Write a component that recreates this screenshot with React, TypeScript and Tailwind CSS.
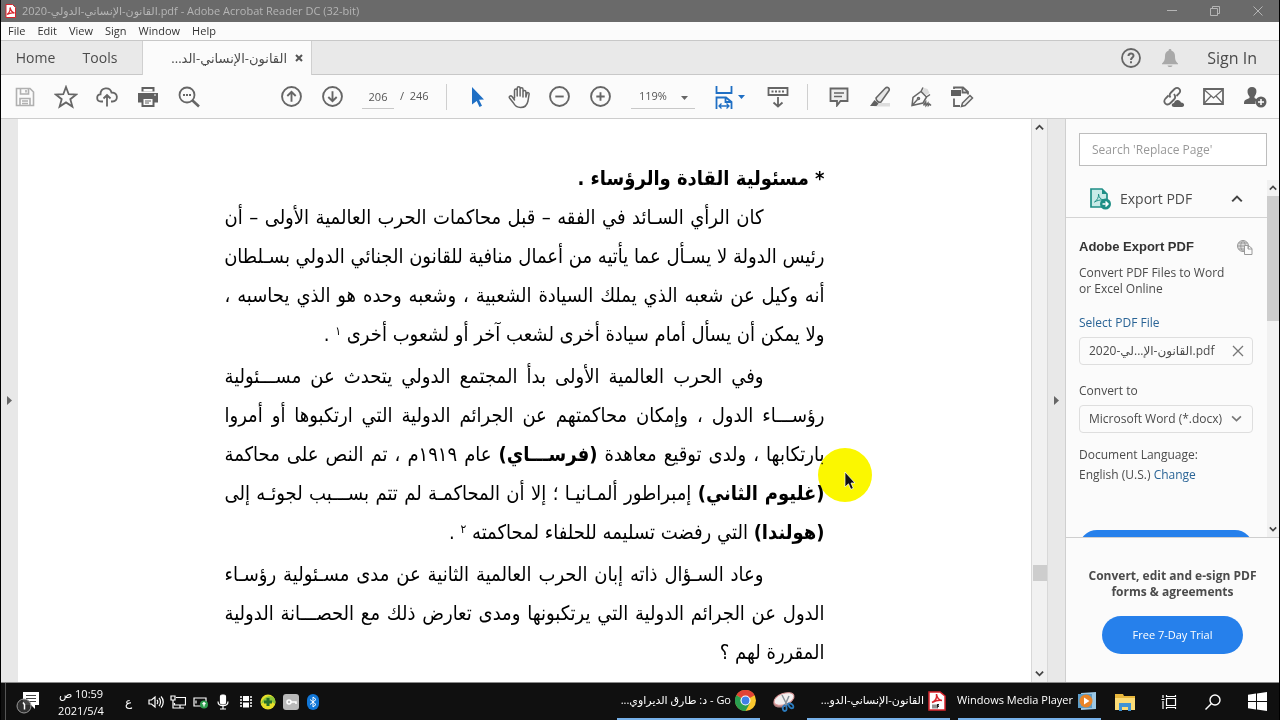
import type { ReactNode } from 'react';

interface IconButtonProps {
    label: string;
    children: ReactNode;
    className?: string;
}

interface TaskProps {
    label: string;
    rtl?: boolean;
    children: ReactNode;
}

interface LineProps {
    children: ReactNode;
    indent?: boolean;
    last?: boolean;
}

const stroke = { fill: 'none', stroke: '#666', strokeWidth: 1.8 };

function IconButton({ label, children, className = 'w-[41px]' }: IconButtonProps) {
    return (
        <button aria-label={label} className={`h-full shrink-0 flex items-center justify-center ${className}`}>
            {children}
        </button>
    );
}

function Line({ children, indent = false, last = false }: LineProps) {
    return (
        <span className={`block whitespace-nowrap ${indent ? 'pr-[61px]' : ''} ${last ? '' : '[text-align-last:justify]'}`}>
            {children}
        </span>
    );
}

function Chevron({ up = false, size = 10, color = '#444', width = 2 }: { up?: boolean; size?: number; color?: string; width?: number }) {
    return (
        <svg width={size} height={size} viewBox="0 0 10 10" fill="none" stroke={color} strokeWidth={width}>
            <path d={up ? 'M1 7 5 3l4 4' : 'M1 3l4 4 4-4'} />
        </svg>
    );
}

function Task({ label, rtl = false, children }: TaskProps) {
    return (
        <button className="h-full w-[143px] shrink-0 flex items-center justify-end gap-1 pr-1 border-b-2 border-[#76b0e8] text-[11px] text-white">
            <span dir={rtl ? 'rtl' : 'ltr'} className="whitespace-nowrap">{label}</span>
            {children}
        </button>
    );
}

function TitleBar() {
    return (
        <header className="h-[22px] shrink-0 flex items-center bg-[#6a6a6a] pl-1 text-[11px] text-[#b5b5b5]">
            <svg width="11" height="14" viewBox="0 0 11 14">
                <path d="M1 .5h6.500L10.500 3.500v10H1z" fill="#fff" stroke="#d9262e" />
                <path d="M2 10.500C4 9 5.500 6 5 3.500c1 4 2.500 5 4.500 5.500C7 8.500 4.500 9 2 10.500z" fill="none" stroke="#d9262e" strokeWidth="1.300" />
            </svg>
            <span className="ml-[6px]">القانون-الإنساني-الدولي-2020.pdf - Adobe Acrobat Reader DC (32-bit)</span>
            <div className="ml-auto h-full flex">
                <IconButton label="Minimize" className="w-[42px]">
                    <svg width="10" height="10" viewBox="0 0 10 10" stroke="#b5b5b5"><path d="M0 4.500h10" /></svg>
                </IconButton>
                <IconButton label="Restore" className="w-[43px]">
                    <svg width="10" height="10" viewBox="0 0 10 10" fill="none" stroke="#b5b5b5"><path d="M.5 2.500h7v7h-7zM2.500 2V.5h7v7H8" /></svg>
                </IconButton>
                <IconButton label="Close" className="w-[43px]">
                    <svg width="10" height="10" viewBox="0 0 10 10" stroke="#b5b5b5"><path d="M.5.5l9 9M9.500.5l-9 9" /></svg>
                </IconButton>
            </div>
        </header>
    );
}

function MenuBar() {
    return (
        <nav className="h-[18px] shrink-0 flex items-center gap-3 bg-[#fbfbfb] pl-[7px] text-[11px] text-[#333]">
            {['File', 'Edit', 'View', 'Sign', 'Window', 'Help'].map(item => (
                <button key={item}>{item}</button>
            ))}
        </nav>
    );
}

function TabBar() {
    return (
        <div className="h-[35px] shrink-0 flex bg-[#e9e9e9] border-y border-[#c8c8c8] text-sm text-[#4b4b4b]">
            <button className="w-[69px]">Home</button>
            <button className="w-[60px]">Tools</button>
            <div className="ml-3 -mb-px w-[170px] flex items-center justify-end gap-2 bg-[#fbfbfb] border-x border-[#d0d0d0] pr-2">
                <span dir="rtl" className="text-[13px]">القانون-الإنساني-الد...</span>
                <button aria-label="Close tab">
                    <svg width="8" height="8" viewBox="0 0 8 8" stroke="#555" strokeWidth="2"><path d="M1 1l6 6M7 1 1 7" /></svg>
                </button>
            </div>
            <div className="ml-auto flex items-center pr-[22px]">
                <IconButton label="Help" className="w-[39px]">
                    <svg width="20" height="20" viewBox="0 0 20 20" {...stroke}>
                        <circle cx="10" cy="10" r="9" />
                        <path d="M7.500 8c0-3.300 5-3.300 5-.3C12.500 9.500 10 9.500 10 12M10 13.300v2" strokeWidth="2" />
                    </svg>
                </IconButton>
                <IconButton label="Notifications" className="w-[39px]">
                    <svg width="18" height="20" viewBox="0 0 18 20" fill="#a9a9a9">
                        <path d="M9 1c1 0 1.500.7 1.500 1.700C13 3.400 14 5.500 14 8c0 4 .8 5.500 3 7.500v.8H1v-.8C3.200 13.500 4 12 4 8c0-2.500 1-4.600 3.500-5.300C7.500 1.700 8 1 9 1zM6.500 17.500h5c-.5 2-4.500 2-5 0z" />
                    </svg>
                </IconButton>
                <button className="ml-[18px] text-base font-medium">Sign In</button>
            </div>
        </div>
    );
}

function Toolbar() {
    return (
        <div className="h-11 shrink-0 flex items-center bg-[#fbfbfb] border-b border-[#cdcdcd] pl-[3px] pr-1 text-[11px] text-[#555]">
            <IconButton label="Save">
                <svg width="20" height="20" viewBox="0 0 20 20" fill="none" stroke="#b0b0b0" strokeWidth="1.600">
                    <path d="M1.500 1.500h13.500l3.500 3.500v13.500h-17zM5.500 1.500v5.500h8V1.500M11 3v2.500M5 18.500v-7h10v7M7 14h6M7 16.500h6" />
                </svg>
            </IconButton>
            <IconButton label="Star">
                <svg width="24" height="24" viewBox="0 0 24 24" {...stroke}>
                    <path d="M12 2l2.700 7.200 7.600.3-6 4.700 2.100 7.400L12 17.400l-6.400 4.200 2.100-7.400-6-4.700 7.600-.3z" />
                </svg>
            </IconButton>
            <IconButton label="Upload to cloud">
                <svg width="22" height="22" viewBox="0 0 22 22" {...stroke}>
                    <path d="M7 15.500H5c-5 0-5-7-.5-7.200C4.500 1 14 .5 15.500 6.500c7-.3 7 9 1 9H15M11 20.500V9M7.500 12.500 11 9l3.500 3.500" />
                </svg>
            </IconButton>
            <IconButton label="Print">
                <svg width="20" height="20" viewBox="0 0 20 20">
                    <path d="M3.500 0h13v4.500h-13zM0 6h20v9.500h-4V11H4v4.500H0zM3.500 11h13v9h-13z" fill="#606060" />
                    <path d="M5.500 2h9v2.500h-9zM5.500 12h9v6h-9z" fill="#fbfbfb" />
                    <path d="M7 14h6M7 16h4" stroke="#606060" />
                    <path d="M16 8h2" stroke="#fff" />
                </svg>
            </IconButton>
            <IconButton label="Find">
                <svg width="22" height="22" viewBox="0 0 22 22" {...stroke}>
                    <circle cx="9" cy="9" r="7.500" />
                    <path d="M14.500 14.500l6.500 6" strokeWidth="2.600" />
                    <path d="M5 9h2M8 9h2M11 9h2" />
                </svg>
            </IconButton>
            <div className="ml-[62px] h-full flex">
                <IconButton label="Previous page">
                    <svg width="21" height="21" viewBox="0 0 20 20" {...stroke}>
                        <circle cx="10" cy="10" r="9" />
                        <path d="M10 15V5.500M6 9.500l4-4 4 4" />
                    </svg>
                </IconButton>
                <IconButton label="Next page">
                    <svg width="21" height="21" viewBox="0 0 20 20" {...stroke}>
                        <circle cx="10" cy="10" r="9" />
                        <path d="M10 5v9.500M6 10.500l4 4 4-4" />
                    </svg>
                </IconButton>
            </div>
            <input aria-label="Page number" defaultValue="206" className="ml-[9px] w-8 h-6 text-center bg-transparent border-b border-[#c8c8c8]" />
            <span className="ml-[6px] w-[38px] whitespace-pre">/  246</span>
            <div className="ml-2 mr-[10px] w-px h-[26px] bg-[#cfcfcf]" />
            <IconButton label="Select tool">
                <svg width="14" height="20" viewBox="0 0 14 20" fill="#1f6fc4"><path d="M1 0l12 12.500-5 .3 3 6-2.500 1.200-2.800-6L1 17.500z" /></svg>
            </IconButton>
            <IconButton label="Hand tool">
                <svg width="22" height="24" viewBox="0 0 22 24" {...stroke} strokeWidth="1.500" strokeLinejoin="round" strokeLinecap="round">
                    <path d="M6.500 13V5.500c0-2 2.700-2 2.700 0V11 3.200c0-2 2.900-2 2.900 0V11 4.200c0-2 2.900-2 2.900 0V12 7c0-2 2.900-2 2.900 0v5l1-3.500c.5-1.500 2.500-1 2.200.7L20 16c-.8 4-3.500 6.500-7.500 6.500-3.500 0-5.500-1.500-7-4.500L1.500 13c-1-1.800 1.200-2.800 2.500-1.500L6.500 15" />
                </svg>
            </IconButton>
            <IconButton label="Zoom out">
                <svg width="21" height="21" viewBox="0 0 20 20" {...stroke}><circle cx="10" cy="10" r="9" /><path d="M6 10h8" /></svg>
            </IconButton>
            <IconButton label="Zoom in">
                <svg width="21" height="21" viewBox="0 0 20 20" {...stroke}><circle cx="10" cy="10" r="9" /><path d="M6 10h8M10 6v8" /></svg>
            </IconButton>
            <div className="relative ml-[10px]">
                <select aria-label="Zoom level" className="appearance-none w-16 h-6 pl-2 bg-transparent border-b border-[#c8c8c8]">
                    <option>119%</option>
                </select>
                <svg width="7" height="4" viewBox="0 0 7 4" fill="#666" className="absolute right-[7px] top-[11px] pointer-events-none"><path d="M0 0h7L3.500 4z" /></svg>
            </div>
            <IconButton label="Fit width" className="ml-4 w-[38px] gap-[5px]">
                <svg width="18" height="24" viewBox="0 0 18 24" fill="none" stroke="#1f6fc4" strokeWidth="1.800">
                    <path d="M1.500 1v7h15V1M1.500 24V12.500h9.500l5.500 4.500v7M10.500 12.500V17h6" />
                    <path d="M4 21h10M6.500 18.500 4 21l2.500 2.500M11.500 18.500 14 21l-2.500 2.500" strokeWidth="1.300" />
                </svg>
                <svg width="7" height="4" viewBox="0 0 7 4" fill="#1f6fc4"><path d="M0 0h7L3.500 4z" /></svg>
            </IconButton>
            <IconButton label="Scroll mode" className="ml-2 w-[41px]">
                <svg width="22" height="22" viewBox="0 0 22 22" {...stroke}>
                    <path d="M1.500 2h19v7h-19zM4.500 5.500h2M8 5.500h2M11.500 5.500h2M15 5.500h2M11 11v9.500M6.500 16.500l4.500 4 4.500-4" />
                </svg>
            </IconButton>
            <div className="ml-[9px] mr-[10px] w-px h-[26px] bg-[#cfcfcf]" />
            <IconButton label="Comment">
                <svg width="20" height="20" viewBox="0 0 20 20" {...stroke}>
                    <path d="M1.500 1.500h17v12.500h-7L8 18.500V14H1.500z" fill="#eee" /><path d="M5 6h10M5 9.500h8" strokeWidth="1.400" />
                </svg>
            </IconButton>
            <IconButton label="Highlight">
                <svg width="22" height="22" viewBox="0 0 22 22" {...stroke} strokeWidth="1.600">
                    <path d="M8 17h13v3.500H5z" fill="#ddd" stroke="none" />
                    <path d="M7 12 16 2.500c2.500-2.500 5.500 0 3.500 2.800L12 16c-2 1-5-1-5-4z" fill="#e6e6e6" />
                    <path d="M5.500 14l4 3.500-2 2.500H1z" fill="#606060" stroke="none" />
                </svg>
            </IconButton>
            <IconButton label="Sign">
                <svg width="22" height="22" viewBox="0 0 22 22" {...stroke} strokeWidth="1.500">
                    <path d="M11.500 6l3-4 3 1 2 4-3 2z" fill="#ddd" stroke="none" />
                    <path d="M2 19.500 3 11.500l8-6 5.500 5.500-3.500 6zM2 19.500l5.500-6M13 1.500l-2 4M16.500 11l3.500-2.500M13.500 19.500l2.200-3.500.3 3.500 2-2.500.3 2.500 1.200-1.500 1.500 1.500" />
                    <circle cx="8.500" cy="12.500" r="1" />
                </svg>
            </IconButton>
            <IconButton label="More tools">
                <svg width="24" height="22" viewBox="0 0 24 22" {...stroke}>
                    <path d="M1 4h10v6H1z" fill="#606060" stroke="none" />
                    <path d="M4 3V1.500h9l5 4.500v2.500M12.500 1.500V6.500H18M4 12.500v7.500h6" />
                    <path d="M12.500 17 20 9.500l2.500 2.500L15 19.500l-3.500 1z" fill="#eee" strokeWidth="1.500" />
                </svg>
            </IconButton>
            <div className="ml-auto h-full flex">
                <IconButton label="Share link">
                    <svg width="24" height="22" viewBox="0 0 24 22" {...stroke}>
                        <path d="M9.500 11.500c-1.500-2-1-3.500.5-5l3.500-3.500c3.500-3 7.500 1 4.500 4.500l-2.500 2.500M13 8c1.500 2 1.500 4 0 5.500L9.500 17c-3.500 3.500-8.500-.5-5-4.500L7.500 9.500" />
                        <path d="M13 21c-3 0-3-4 0-4 1-4 6-4 7-.5 4 0 4 4.500 1 4.500z" fill="#606060" stroke="none" />
                    </svg>
                </IconButton>
                <IconButton label="Email">
                    <svg width="21" height="17" viewBox="0 0 21 17" {...stroke}>
                        <path d="M1 1h19v15H1z" /><path d="M1 1.500l9.500 8.500L20 1.500M1 15.500l7-7.500M20 15.500 13 8" strokeWidth="1.200" />
                    </svg>
                </IconButton>
                <IconButton label="Add people">
                    <svg width="24" height="22" viewBox="0 0 24 22" fill="#606060">
                        <path d="M9 1c6 0 5 7 2.500 9.500V12l3 1.500c-2 1-2.500 2.500-2 4.500H1c0-4 1-4 5.500-6v-1.500C4 8 3 1 9 1z" />
                        <circle cx="18" cy="16" r="5.500" /><path d="M15 16h6M18 13v6" stroke="#fff" strokeWidth="1.500" />
                    </svg>
                </IconButton>
            </div>
        </div>
    );
}

function DocumentPage() {
    return (
        <main className="relative flex-1 min-w-0 overflow-hidden bg-white">
            <article dir="rtl" className="mx-auto mt-10 w-full max-w-[600px] font-['DejaVu_Sans_Condensed','DejaVu_Sans',sans-serif] text-xl leading-[39px] text-black">
                <h1 className="text-xl leading-[39px] font-bold">* مسئولية القادة والرؤساء .</h1>
                <p>
                    <Line indent>كان الرأي السـائد في الفقه – قبل محاكمات الحرب العالمية الأولى – أن</Line>
                    <Line>رئيس الدولة لا يسـأل عما يأتيه من أعمال منافية للقانون الجنائي الدولي بسـلطان</Line>
                    <Line>أنه وكيل عن شعبه الذي يملك السيادة الشعبية ، وشعبه وحده هو الذي يحاسبه ،</Line>
                    <Line last>ولا يمكن أن يسأل أمام سيادة أخرى لشعب آخر أو لشعوب أخرى <sup className="text-xs leading-none">١</sup> .</Line>
                </p>
                <p className="mt-[3px]">
                    <Line indent>وفي الحرب العالمية الأولى بدأ المجتمع الدولي يتحدث عن مســـئولية</Line>
                    <Line>رؤســـاء الدول ، وإمكان محاكمتهم عن الجرائم الدولية التي ارتكبوها أو أمروا</Line>
                    <Line>بارتكابها ، ولدى توقيع معاهدة <b>(فرســـاي)</b> عام ١٩١٩م ، تم النص على محاكمة</Line>
                    <Line><b>(غليوم الثاني)</b> إمبراطور ألمـانيـا ؛ إلا أن المحاكمـة لم تتم بســـبب لجوئـه إلى</Line>
                    <Line last><b>(هولندا)</b> التي رفضت تسليمه للحلفاء لمحاكمته <sup className="text-xs leading-none">٢</sup> .</Line>
                </p>
                <p className="mt-[3px]">
                    <Line indent>وعاد السـؤال ذاته إبان الحرب العالمية الثانية عن مدى مسـئولية رؤسـاء</Line>
                    <Line>الدول عن الجرائم الدولية التي يرتكبونها ومدى تعارض ذلك مع الحصـــانة الدولية</Line>
                    <Line last>المقررة لهم ؟</Line>
                </p>
            </article>
            <div className="absolute left-[800px] top-[329px] size-[54px] rounded-full bg-[#fbf700] mix-blend-multiply" />
            <svg width="12" height="20" viewBox="0 0 12 20" className="absolute left-[826px] top-[352px]">
                <path d="M1 1v15l3.500-3.200 2.300 5.500 2.500-1-2.300-5.300H11z" fill="#111" stroke="#fff" strokeWidth=".7" />
            </svg>
        </main>
    );
}

function DocumentScrollbar() {
    return (
        <div className="w-[17px] shrink-0 flex flex-col items-center bg-[#f1f1f1] border-x border-[#d8d8d8]">
            <button aria-label="Scroll up" className="h-[17px]"><Chevron up size={9} /></button>
            <div className="flex-[46]" />
            <div className="h-4 w-[14px] bg-[#cdcdcd]" />
            <div className="flex-[9]" />
            <button aria-label="Scroll down" className="h-[17px]"><Chevron size={9} /></button>
        </div>
    );
}

function ExportPanel() {
    return (
        <aside className="w-[214px] shrink-0 flex flex-col bg-[#fbfbfb] border-l border-[#cfcfcf] text-xs text-[#4b4b4b]">
            <div className="pl-[13px] pr-3 py-[14px]">
                <input aria-label="Search tools" placeholder="Search 'Replace Page'" className="w-full h-[33px] px-3 bg-white border border-[#bdbdbd] placeholder:text-[#999]" />
            </div>
            <div className="flex-1 min-h-0 flex">
                <div className="flex-1 min-w-0 overflow-hidden">
                    <button className="w-full h-[38px] flex items-center pl-6 pr-6 border-b border-[#d4d4d4] text-sm">
                        <svg width="21" height="22" viewBox="0 0 21 22">
                            <path d="M1 1h11l5 5v13H1z" fill="#c9ebe8" stroke="#1f8f86" strokeWidth="1.700" />
                            <path d="M12 1v5h5" fill="#1f8f86" />
                            <path d="M4.500 14C7 12.500 9 9 8.500 6c.5 4 2.500 5.500 5 6-3-.5-6.500.5-9 2z" fill="none" stroke="#1f8f86" />
                            <circle cx="15.500" cy="16" r="5.500" fill="#1f8f86" />
                            <path d="M12.500 16h5M15.500 13.500 18 16l-2.500 2.500" stroke="#fff" strokeWidth="1.500" fill="none" />
                        </svg>
                        <span className="ml-[9px]">Export PDF</span>
                        <span className="ml-auto"><Chevron up size={12} width={1.7} /></span>
                    </button>
                    <div className="pl-[13px] pr-[14px] pt-[19px]">
                        <div className="flex items-center justify-between">
                            <h2 className="font-['Liberation_Sans',sans-serif] text-[13px] leading-5 font-bold text-[#333]">Adobe Export PDF</h2>
                            <svg width="16" height="15" viewBox="0 0 16 15" fill="none" stroke="#999">
                                <circle cx="6" cy="6" r="5.500" fill="#ddd" />
                                <path d="M.5 6h11M6 .5c-3 3-3 8 0 11M6 .5c3 3 3 8 0 11M1.500 3h9M1.500 9h9" />
                                <path d="M7.500 5.500h4l3.500 3v6H7.500zM11 5.500V9h4" fill="#fbfbfb" />
                            </svg>
                        </div>
                        <p className="mt-2 leading-4">Convert PDF Files to Word<br />or Excel Online</p>
                        <a href="#file" className="block mt-4 leading-5 text-[#2a6496]">Select PDF File</a>
                        <div className="mt-1 h-7 flex items-center justify-between border border-[#dedede] rounded-sm pl-[9px] pr-2">
                            <span className="whitespace-nowrap">القانون-الإ...لي-2020.pdf</span>
                            <button aria-label="Remove file">
                                <svg width="12" height="12" viewBox="0 0 12 12" stroke="#777" strokeWidth="1.300"><path d="M1 1l10 10M11 1 1 11" /></svg>
                            </button>
                        </div>
                        <label htmlFor="format" className="block mt-4 leading-5">Convert to</label>
                        <div className="relative mt-1">
                            <select id="format" className="appearance-none w-full h-7 pl-[9px] border border-[#dedede] rounded-sm">
                                <option>Microsoft Word (*.docx)</option>
                            </select>
                            <span className="absolute right-[11px] top-2 pointer-events-none"><Chevron size={11} color="#777" width={1.5} /></span>
                        </div>
                        <p className="mt-3 leading-5">Document Language:</p>
                        <p className="leading-5">English (U.S.) <a href="#language" className="text-[#2a6496]">Change</a></p>
                        <button aria-label="Convert" className="block mt-[45px] w-full h-9 rounded-full bg-[#2680eb]" />
                    </div>
                </div>
                <div className="w-3 shrink-0 flex flex-col items-center bg-[#f1f1f1]">
                    <button aria-label="Scroll panel up" className="h-4"><Chevron up size={8} /></button>
                    <div className="flex-[5] w-full bg-[#cdcdcd]" />
                    <div className="flex-[8]" />
                    <button aria-label="Scroll panel down" className="h-4"><Chevron size={8} /></button>
                </div>
            </div>
            <div className="h-[145px] shrink-0 border-t border-[#cfcfcf] pt-[30px] text-center">
                <p className="leading-4 font-bold">Convert, edit and e-sign PDF<br />forms &amp; agreements</p>
                <button className="mt-4 w-[141px] h-[38px] rounded-full bg-[#2680eb] text-[11px] text-white">Free 7-Day Trial</button>
            </div>
        </aside>
    );
}

function Taskbar() {
    return (
        <footer className="h-[38px] shrink-0 flex items-center bg-[#101010] border-t border-[#8a8a8a] text-white">
            <div className="ml-1 w-px h-full bg-[#555]" />
            <IconButton label="Notifications" className="w-11">
                <svg width="24" height="24" viewBox="0 0 24 24">
                    <path d="M7 2h16v13h-4v4l-4-4H7z" fill="#fff" />
                    <path d="M10 5.500h10M10 8.500h10M12 11.500h8" stroke="#444" />
                    <circle cx="8" cy="16" r="7" fill="#333" fillOpacity=".9" stroke="#999" />
                    <path d="M7 12.500l1.500 2v5" stroke="#fff" strokeWidth="1.500" fill="none" />
                </svg>
            </IconButton>
            <div dir="rtl" className="w-[62px] text-center text-[11px] leading-[17px]">
                <p>10:59 ص</p>
                <p>2021/5/4</p>
            </div>
            <button className="w-[33px] text-xs">ع</button>
            <IconButton label="Volume" className="w-[22px]">
                <svg width="16" height="14" viewBox="0 0 16 14" fill="none" stroke="#fff" strokeWidth="1.200">
                    <path d="M1 5h2.500L7 2v10L3.500 9H1zM9 5c1 1 1 3 0 4M11 3c2 2 2 6 0 8M13 1.500c3 3 3 8 0 11" />
                </svg>
            </IconButton>
            <IconButton label="Network" className="w-[22px]">
                <svg width="16" height="14" viewBox="0 0 16 14" fill="none" stroke="#fff" strokeWidth="1.200">
                    <path d="M6 2.500h9.500v7.500h-11V8M10 10v2.500M6 13h8M1 1h4v4H1zM3 5v8h3" />
                </svg>
            </IconButton>
            <IconButton label="Drive" className="w-[23px]">
                <svg width="16" height="14" viewBox="0 0 16 14" fill="none" stroke="#fff" strokeWidth="1.200">
                    <path d="M1 3h12v8H1zM3 5.500v3" /><circle cx="11" cy="9.500" r="4" fill="#2e9e4f" stroke="none" /><path d="M11 7.500v4M9.500 9l1.500-1.500L12.500 9" />
                </svg>
            </IconButton>
            <IconButton label="Microphone" className="w-[22px]">
                <svg width="12" height="16" viewBox="0 0 12 16" fill="none" stroke="#fff" strokeWidth="1.200">
                    <rect x="3.500" y="1" width="5" height="9" rx="1.500" fill="#fff" /><path d="M1 7.500c0 5.500 10 5.500 10 0M6 12v3M3 15h6" />
                </svg>
            </IconButton>
            <IconButton label="Video" className="w-[23px]">
                <svg width="12" height="14" viewBox="0 0 12 14" fill="#fff">
                    <path d="M3 1h6v5H3zM3 7.500h6v5H3z" /><path d="M1 1v12M11 1v12" stroke="#fff" strokeWidth="1.500" strokeDasharray="2 1" />
                </svg>
            </IconButton>
            <IconButton label="Antivirus" className="w-[22px]">
                <svg width="16" height="16" viewBox="0 0 16 16"><circle cx="8" cy="8" r="7.500" fill="#e7e02a" /><path d="M1 10c2-7 8-9 12-7 2 1 3 5 2 7-5-4-9-3-14 0z" fill="#8cc63a" /><path d="M8 4v8M4 8h8" stroke="#25702b" strokeWidth="3" /></svg>
            </IconButton>
            <IconButton label="Security key" className="w-[23px]">
                <svg width="16" height="16" viewBox="0 0 16 16"><rect width="16" height="16" rx="3" fill="#b9b9b9" /><circle cx="6" cy="8" r="2" fill="none" stroke="#fff" strokeWidth="1.500" /><path d="M8 8h5v2" fill="none" stroke="#fff" strokeWidth="1.500" /></svg>
            </IconButton>
            <IconButton label="Bluetooth" className="w-[22px]">
                <svg width="12" height="16" viewBox="0 0 12 16"><rect width="12" height="16" rx="6" fill="#1177d8" /><path d="M3 5.500l6 5L6 13V3l3 2.500-6 5" fill="none" stroke="#fff" /></svg>
            </IconButton>
            <div className="ml-auto h-full flex items-center">
                <Task label="Go - د: طارق الديراوي..." rtl>
                    <svg width="21" height="21" viewBox="0 0 21 21" className="shrink-0">
                        <circle cx="10.500" cy="10.500" r="10.500" fill="#fbc82e" />
                        <path d="M10.500 10.500 1.400 5.200A10.500 10.500 0 0 1 19.600 5.200z" fill="#e04336" />
                        <path d="M1.400 5.200A10.500 10.500 0 0 0 10.500 21l4.500-8z" fill="#2a9e50" />
                        <circle cx="10.500" cy="10.500" r="5" fill="#fff" /><circle cx="10.500" cy="10.500" r="3.900" fill="#3f7fe8" />
                    </svg>
                </Task>
                <IconButton label="Snipping Tool" className="w-[47px]">
                    <svg width="24" height="22" viewBox="0 0 24 22">
                        <ellipse cx="11" cy="10" rx="10" ry="6" fill="#b08080" transform="rotate(-20 11 10)" />
                        <ellipse cx="12" cy="8" rx="10.500" ry="5.500" fill="#f3f0f0" stroke="#d99" transform="rotate(-20 12 8)" />
                        <path d="M10 4l5 10M17 5l-4 9" stroke="#8a9299" strokeWidth="1.500" />
                        <path d="M13 14c-4 2-2 6 0 6s2-3 1-6M16 13c1-2 7 1 5 4-2 1-4-1-5-4z" fill="none" stroke="#2b7bbd" strokeWidth="1.800" />
                    </svg>
                </IconButton>
                <Task label="القانون-الإنساني-الدو..." rtl>
                    <svg width="18" height="20" viewBox="0 0 18 20" className="shrink-0">
                        <path d="M1 1h11l5 4v14H1z" fill="#fff" stroke="#d9262e" strokeWidth="1.500" />
                        <path d="M4 11.500C7.500 10 9 6.500 8.500 3c.5 4.500 2.500 6 5.500 6.500-3.500-.5-7 .5-10 2z" fill="none" stroke="#d9262e" strokeWidth="1.500" />
                        <path d="M5 13.500v4M7 17.500v-4M9 17.500v-4h2M9 15.500h2" stroke="#222" />
                    </svg>
                </Task>
                <div className="w-2" />
                <Task label="Windows Media Player">
                    <svg width="20" height="20" viewBox="0 0 20 20" className="shrink-0">
                        <path d="M4 2l15-1v17L4 19z" fill="#9cc7e4" /><path d="M1 3h14v14H1z" fill="#5c9cc7" />
                        <circle cx="9" cy="10" r="6.500" fill="#e98427" /><path d="M7 6.500v7l5.500-3.500z" fill="#fff" />
                    </svg>
                </Task>
                <IconButton label="File Explorer" className="ml-[2px] w-11">
                    <svg width="20" height="18" viewBox="0 0 20 18">
                        <path d="M0 1h8l1 2h11v14H0z" fill="#e8b73c" /><path d="M0 5h20v12H0z" fill="#fbdc77" />
                        <path d="M4 10h12v8h-3v-4H7v4H4z" fill="#3f93d4" />
                    </svg>
                </IconButton>
                <IconButton label="Task View" className="w-11">
                    <svg width="16" height="16" viewBox="0 0 16 16" fill="none" stroke="#fff" strokeWidth="1.200">
                        <path d="M5.500 4.500h9v7h-9zM5.500 1v1.500h9V1M5.500 15v-1.500h9V15M2 1v3M2 7v8M.5 5.500h3" />
                    </svg>
                </IconButton>
                <IconButton label="Search" className="w-11">
                    <svg width="16" height="16" viewBox="0 0 16 16" fill="none" stroke="#fff" strokeWidth="1.400"><circle cx="10" cy="6" r="5" /><path d="M6.500 9.500.5 15.500" /></svg>
                </IconButton>
                <IconButton label="Start" className="w-11">
                    <svg width="19" height="19" viewBox="0 0 19 19" fill="#fff"><path d="M0 2.700 8 1.600V9H0zM9 1.500 19 0v9H9zM0 10h8v7.400L0 16.300zM9 10h10v9L9 17.500z" /></svg>
                </IconButton>
            </div>
        </footer>
    );
}

export default function App() {
    return (
        <div className="h-screen flex flex-col overflow-hidden border-x border-black bg-[#e8e8e8] font-['Open_Sans','DejaVu_Sans',sans-serif]">
            <TitleBar />
            <MenuBar />
            <TabBar />
            <Toolbar />
            <div className="flex-1 min-h-0 flex">
                <button aria-label="Show navigation pane" className="w-[17px] shrink-0 flex items-center justify-center">
                    <svg width="5" height="9" viewBox="0 0 5 9" fill="#666"><path d="M0 0l5 4.500L0 9z" /></svg>
                </button>
                <DocumentPage />
                <DocumentScrollbar />
                <button aria-label="Hide tools pane" className="w-[17px] shrink-0 flex items-center justify-center">
                    <svg width="5" height="9" viewBox="0 0 5 9" fill="#666"><path d="M0 0l5 4.500L0 9z" /></svg>
                </button>
                <ExportPanel />
            </div>
            <Taskbar />
        </div>
    );
}
